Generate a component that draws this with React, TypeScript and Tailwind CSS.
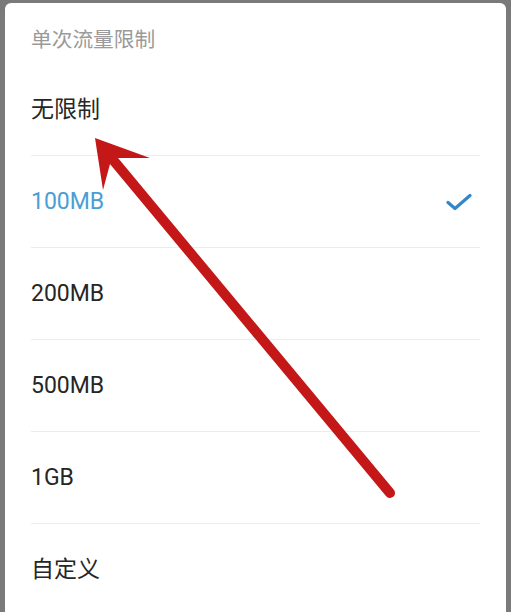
import React from "react";

const items = ["无限制", "100MB", "200MB", "500MB", "1GB", "自定义"];

export default function App() {
  return (
    <div
      className="relative w-[511px] h-[612px] overflow-hidden bg-[#7a7a7a] pl-[5px] pr-[5px] pt-[3px]"
      style={{ fontFamily: 'Roboto, "Noto Sans CJK SC", sans-serif' }}
    >
      <div className="h-full w-full rounded-t-[6px] bg-white">
        <div className="h-[61px] pt-[24px] pl-[26px] text-[20.7px] leading-[26px] text-[#9a9a9a]">
          单次流量限制
        </div>
        <div className="mx-[26px] flex flex-col">
          {items.map((label, i) => {
            const selected = label === "100MB";
            const last = i === items.length - 1;
            return (
              <div
                key={label}
                className={
                  "flex h-[92px] items-center justify-between pr-[8px] " +
                  (last ? "" : "border-b border-[#ececec]")
                }
              >
                <span
                  className={
                    "text-[23px] leading-[28px] " +
                    (selected ? "text-[#4a9ed6]" : "text-[#262626]")
                  }
                >
                  {label}
                </span>
                {selected && (
                  <svg width="26" height="18" viewBox="0 0 26 18" fill="none">
                    <path
                      d="M2 9.5 L9 15.5 L24 2.5"
                      stroke="#3386c8"
                      strokeWidth="3.2"
                      strokeLinecap="round"
                      strokeLinejoin="round"
                    />
                  </svg>
                )}
              </div>
            );
          })}
        </div>
      </div>
      <svg
        className="pointer-events-none absolute left-0 top-0"
        width="511"
        height="612"
        viewBox="0 0 511 612"
      >
        <line
          x1="390"
          y1="493"
          x2="114"
          y2="161"
          stroke="#c41818"
          strokeWidth="10"
          strokeLinecap="round"
        />
        <polygon
          points="95,138 150,158 118,158 110,164 103,190"
          fill="#c41818"
        />
      </svg>
    </div>
  );
}
